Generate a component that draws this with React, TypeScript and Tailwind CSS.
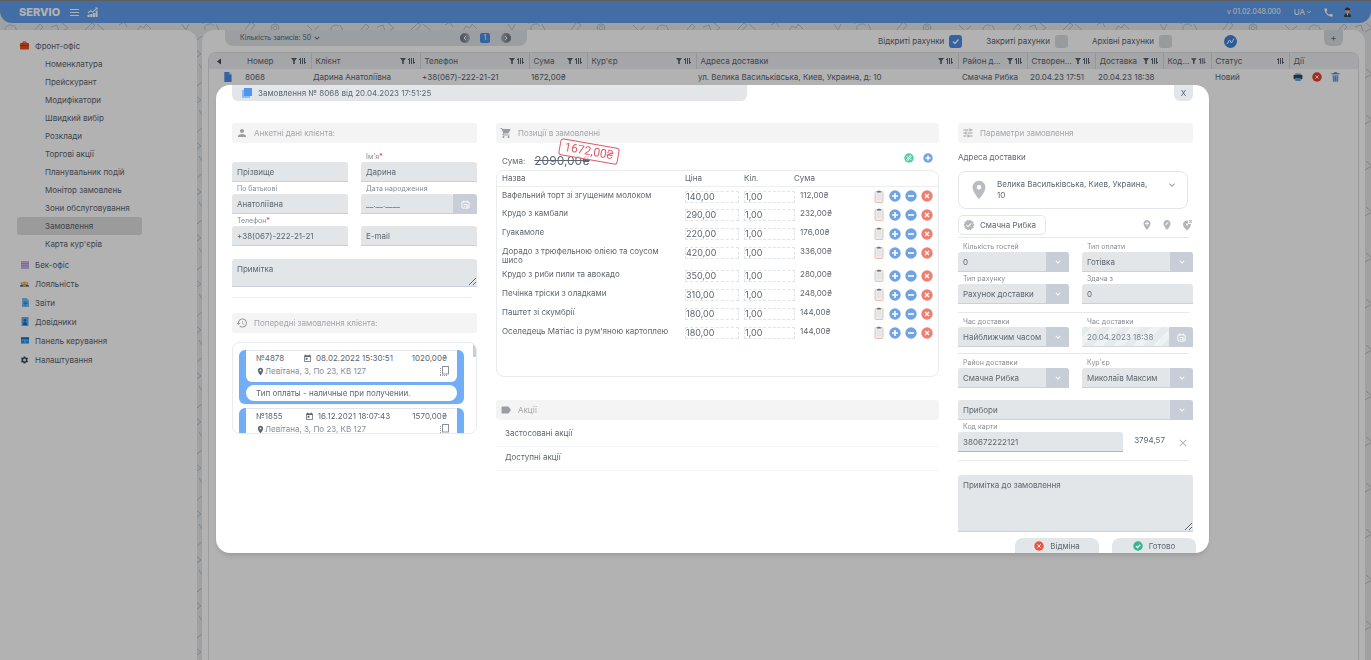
import { useState } from "react";
import type { ReactNode } from "react";
import {
  MdAddLocation,
  MdCall,
  MdClose,
  MdEditLocation,
  MdHistory,
  MdKeyboardArrowDown,
  MdLabel,
  MdLocationOn,
  MdPerson,
  MdSettings,
  MdShoppingCart,
  MdToday,
  MdTune,
  MdVerified,
  MdWrongLocation,
} from "react-icons/md";

const FRONT_OFFICE = [
  "Номенклатура",
  "Прейскурант",
  "Модифікатори",
  "Швидкий вибір",
  "Розклади",
  "Торгові акції",
  "Планувальник подій",
  "Монітор замовлень",
  "Зони обслуговування",
  "Замовлення",
  "Карта кур'єрів",
];

const POSITIONS = [
  { name: "Вафельний торт зі згущеним молоком", price: "140,00", sum: "112,00₴" },
  { name: "Крудо з камбали", price: "290,00", sum: "232,00₴" },
  { name: "Гуакамоле", price: "220,00", sum: "176,00₴" },
  { name: "Дорадо з трюфельною олією та соусом шисо", price: "420,00", sum: "336,00₴" },
  { name: "Крудо з риби пили та авокадо", price: "350,00", sum: "280,00₴" },
  { name: "Печінка тріски з оладками", price: "310,00", sum: "248,00₴" },
  { name: "Паштет зі скумбрії", price: "180,00", sum: "144,00₴" },
  { name: "Оселедець Матіас із рум'яною картоплею", price: "180,00", sum: "144,00₴" },
];

const HISTORY = [
  { no: "№4878", date: "08.02.2022 15:30:51", sum: "1020,00₴", address: "Левітана, 3, По 23, КВ 127" },
  { no: "№1855", date: "16.12.2021 18:07:43", sum: "1570,00₴", address: "Левітана, 3, По 23, КВ 127" },
];

const COLUMNS = [
  { title: "Номер", width: "w-[76px]", filter: true },
  { title: "Клієнт", width: "w-[109px]", filter: true },
  { title: "Телефон", width: "w-[109px]", filter: true },
  { title: "Сума", width: "w-[58px]", filter: true },
  { title: "Кур'єр", width: "w-[109px]", filter: true },
  { title: "Адреса доставки", width: "", filter: true },
  { title: "Район д...", width: "w-[69px]", filter: true },
  { title: "Створен...", width: "w-[68px]", filter: true },
  { title: "Доставка", width: "w-[68px]", filter: true },
  { title: "Код...", width: "w-[48px]", filter: true },
  { title: "Статус", width: "w-[78px]", filter: false },
];

// Faint line drawings behind the panels
function Doodles() {
  return (
    <svg className="absolute inset-0 h-full w-full" aria-hidden="true">
      <defs>
        <pattern id="doodles" width="326" height="46" patternUnits="userSpaceOnUse">
          <g fill="none" stroke="#b9bec3" strokeWidth="1">
            <path d="M5 31a5 5 0 0 1 8-5M14 25l3 6M34 31l6-7 3 3-5 5M51 27l6-2 2 6" />
            <path d="M84 31l8-8 3 2-6 7zM97 24l7 6" />
            <path d="M137 31l3-5 4 2 2-4 5 5M182 24l4 6 3-6" />
            <path d="M205 30a5 5 0 0 1 9-4M216 24l3 6M244 31l7-9 4 3-5 6" />
            <circle cx="275" cy="28" r="4" />
            <circle cx="275" cy="28" r="2" />
            <path d="M307 25l6 6 6-5M196 4l5 4-4 3zM197 40l5-4M199 18l4 6" />
            <path d="M62 23l6 5-7 4M119 25l5-3 3 5" />
          </g>
        </pattern>
      </defs>
      <rect width="100%" height="100%" fill="url(#doodles)" />
    </svg>
  );
}

function ChartIcon() {
  return (
    <svg viewBox="0 0 12 12" className="size-[11px]" fill="#fff" aria-hidden="true">
      <path d="M.5 8.500H3V11H.5zM3.500 7.500H6V11H3.500zM6.500 6.500H9V11H6.500zM9.500 4h2v7h-2z" />
      <path d="M1 6.500l3-2.500 2 1.500 4-3.500" fill="none" stroke="#fff" strokeWidth="1.200" />
      <path d="M8.500.5h3v3z" />
    </svg>
  );
}

function PlusCircle({ className = "size-3" }: { className?: string }) {
  return (
    <svg viewBox="0 0 12 12" className={className} aria-hidden="true">
      <circle cx="6" cy="6" r="5.700" fill="#72a2e6" />
      <path d="M6 3v6M3 6h6" stroke="#fff" strokeWidth="1.600" />
    </svg>
  );
}

function MinusCircle() {
  return (
    <svg viewBox="0 0 12 12" className="size-3" aria-hidden="true">
      <circle cx="6" cy="6" r="5.700" fill="#72a2e6" />
      <path d="M3 6h6" stroke="#fff" strokeWidth="1.600" />
    </svg>
  );
}

function CrossCircle({ className = "size-3", fill = "#f07f72" }: { className?: string; fill?: string }) {
  return (
    <svg viewBox="0 0 12 12" className={className} aria-hidden="true">
      <circle cx="6" cy="6" r="5.700" fill={fill} />
      <path d="M4 4l4 4M8 4l-4 4" stroke="#fff" strokeWidth="1.200" />
    </svg>
  );
}

function CheckCircle() {
  return (
    <svg viewBox="0 0 12 12" className="size-[10px]" aria-hidden="true">
      <circle cx="6" cy="6" r="5.700" fill="#32b893" />
      <path d="M3.500 6l2 2 3.200-3.500" fill="none" stroke="#fff" strokeWidth="1.400" />
    </svg>
  );
}

function PercentCircle() {
  return (
    <svg viewBox="0 0 12 12" className="size-[10px]" aria-hidden="true">
      <circle cx="6" cy="6" r="5.700" fill="#5ccaa5" />
      <path d="M3 4l6 4" stroke="#fff" strokeWidth="1" />
      <circle cx="7.500" cy="4.200" r="1.100" fill="none" stroke="#fff" />
      <circle cx="4.500" cy="7.800" r="1.100" fill="none" stroke="#fff" />
    </svg>
  );
}

function Clipboard() {
  return (
    <svg viewBox="0 0 10 13" className="h-[13px] w-[10px]" aria-hidden="true">
      <rect x="1" y="1.500" width="8" height="11" rx="1" fill="#e9edf2" stroke="#ecc3a6" strokeWidth="1" />
      <path d="M3 2.500V1.300h1.200a.8.8 0 0 1 1.600 0H7v1.200z" fill="#5b6f7c" />
      <path d="M2.500 5h5M2.500 7h5M2.500 9h5" stroke="#d3d9df" strokeWidth=".6" />
    </svg>
  );
}

function CopyIcon() {
  return (
    <svg viewBox="0 0 11 12" className="h-3 w-[11px]" fill="none" stroke="#8a9098" aria-hidden="true">
      <rect x="3.500" y="1.500" width="6" height="7.500" />
      <path d="M1.500 3v8M1 10.500h7" strokeDasharray="1 1" />
    </svg>
  );
}

function CalendarIcon() {
  return (
    <svg viewBox="0 0 10 10" className="size-[9px]" fill="none" stroke="#fff" aria-hidden="true">
      <rect x="1" y="2" width="8" height="7" rx="1" />
      <path d="M3 .5V3M7 .5V3M3 5h4M3 7h1.500" />
      <circle cx="7" cy="7" r="1" />
    </svg>
  );
}

function FilterIcon() {
  return (
    <svg viewBox="0 0 6 6" className="size-[6px]" aria-hidden="true">
      <path d="M0 0h6L3.800 2.800V6H2.200V2.800z" fill="#55606c" />
    </svg>
  );
}

function SortIcon() {
  return (
    <svg viewBox="0 0 7 6" className="h-[6px] w-[7px]" fill="none" stroke="#55606c" aria-hidden="true">
      <path d="M1.500 6V.5M0 2l1.500-1.700M3.500 0v6M5.500 0v5.500M7 4L5.500 5.700" />
    </svg>
  );
}

function SectionTitle({ icon, children }: { icon: ReactNode; children: ReactNode }) {
  return (
    <h3 className="flex h-5 items-center gap-[6px] rounded-[3px] bg-[#f4f4f4] px-1 text-[8px] text-[#a0a5aa]">
      <span className="flex w-3 justify-center text-[12px] text-[#9a9da1]">{icon}</span>
      {children}
    </h3>
  );
}

const FIELD =
  "block h-5 w-full rounded-t-[3px] border-b border-[#c9d0d8] bg-[#e2e6e9] px-[5px] text-[8px] text-[#5d6670] outline-none placeholder:text-[#5d6670]";

function Label({ htmlFor, children, required }: { htmlFor: string; children?: ReactNode; required?: boolean }) {
  return (
    <label htmlFor={htmlFor} className="block h-3 px-[5px] pt-[3px] text-[7px] leading-[8px] text-[#858c94]">
      {children}
      {required && <span className="text-red-500">*</span>}
    </label>
  );
}

type FieldProps = { id: string; label?: string; required?: boolean; value?: string; placeholder?: string };

function TextField({ id, label, required, value, placeholder }: FieldProps) {
  return (
    <div>
      <Label htmlFor={id} required={required}>{label}</Label>
      <input id={id} className={FIELD} defaultValue={value} placeholder={placeholder} aria-label={label ?? placeholder} />
    </div>
  );
}

function DateField({ id, label, value, disabled }: FieldProps & { disabled?: boolean }) {
  return (
    <div>
      <Label htmlFor={id}>{label}</Label>
      <div className="flex">
        <input
          id={id}
          disabled={disabled}
          defaultValue={value}
          className={
            disabled
              ? `${FIELD} min-w-0 flex-1 bg-[repeating-linear-gradient(135deg,#e2e6e9_0px,#e2e6e9_7px,#eceff1_7px,#eceff1_14px)] opacity-80`
              : `${FIELD} min-w-0 flex-1`
          }
        />
        <button aria-label="Календар" className="flex h-5 w-6 items-center justify-center rounded-tr-[3px] bg-[#c7ced8]">
          <CalendarIcon />
        </button>
      </div>
    </div>
  );
}

function SelectField({ id, label, value }: FieldProps) {
  return (
    <div>
      {label && <Label htmlFor={id}>{label}</Label>}
      <div className="relative">
        <select id={id} aria-label={label ?? value} className={`${FIELD} appearance-none`}>
          <option>{value}</option>
        </select>
        <span className="pointer-events-none absolute inset-y-0 right-0 flex w-[23px] items-center justify-center rounded-tr-[3px] bg-[#c7ced8] text-[10px] text-white">
          <MdKeyboardArrowDown />
        </span>
      </div>
    </div>
  );
}

function TopBar() {
  return (
    <header className="relative flex h-[23px] flex-none items-center rounded-b-xl border-t border-[#888] bg-[#609dec] px-[19px] text-white">
      <span className="text-[11px] font-extrabold">SERVIO</span>
      <button aria-label="Меню" className="ml-[10px] flex w-[9px] flex-col gap-[2px]">
        <span className="h-px bg-white" />
        <span className="h-px bg-white" />
        <span className="h-px bg-white" />
      </button>
      <button aria-label="Статистика" className="ml-2"><ChartIcon /></button>
      <span className="ml-auto text-[7px]">v 01.02.048.000</span>
      <button className="ml-[13px] flex items-center text-[8px]">
        UA <MdKeyboardArrowDown />
      </button>
      <button aria-label="Дзвінок" className="ml-[10px] text-[11px]"><MdCall /></button>
      <button aria-label="Профіль" className="ml-[9px]">
        <svg viewBox="0 0 10 11" className="h-[10px] w-[9px]" aria-hidden="true">
          <path d="M1 11c0-3 2-4 4-4s4 1 4 4z" fill="#2c4a58" />
          <path d="M4 7h2l-1 3z" fill="#fff" />
          <circle cx="5" cy="4.500" r="2.500" fill="#f0b07c" />
          <path d="M2 3.500Q2 .5 5 .5t3 3z" fill="#4b3a35" />
        </svg>
      </button>
    </header>
  );
}

function MenuItem({ icon, children }: { icon: ReactNode; children: ReactNode }) {
  return (
    <a href="#" className="flex h-[19px] items-center gap-[6px] pl-5">
      <span className="flex w-[9px] justify-center text-[10px]">{icon}</span>
      {children}
    </a>
  );
}

function Sidebar() {
  return (
    <nav className="w-[197px] flex-none rounded-tr-xl bg-white pt-[6px] text-[8px] text-[#59636f]">
      <MenuItem
        icon={
          <svg viewBox="0 0 9 9" className="size-[9px]">
            <path d="M3 2V1h3v1" fill="none" stroke="#c33b12" />
            <rect y="2" width="9" height="6.500" rx="1" fill="#e4511c" />
            <path d="M0 4.500h9" stroke="#c33b12" />
          </svg>
        }
      >
        Фронт-офіс
      </MenuItem>
      <ul className="pb-[2px] pl-[17px]">
        {FRONT_OFFICE.map((item) => (
          <li key={item}>
            <a
              href="#"
              className={`flex h-[18px] w-[125px] items-center rounded-[3px] pl-7 whitespace-nowrap ${
                item === "Замовлення" ? "bg-[#dedede]" : ""
              }`}
            >
              {item}
            </a>
          </li>
        ))}
      </ul>
      <MenuItem
        icon={
          <svg viewBox="0 0 8 8" className="size-2">
            <rect width="8" height="8" fill="#c9b6e4" />
            <path d="M0 2.500h8M0 5h8" stroke="#a892cf" strokeWidth=".7" />
          </svg>
        }
      >
        Бек-офіс
      </MenuItem>
      <MenuItem
        icon={
          <svg viewBox="0 0 10 8" className="h-2 w-[10px]">
            <g fill="#f5a623">
              <circle cx="2" cy="3" r="1.200" />
              <circle cx="5" cy="2.600" r="1.500" />
              <circle cx="8" cy="3" r="1.200" />
            </g>
            <path d="M0 7q0-2.500 2-2.500h6q2 0 2 2.500z" fill="#4d6470" />
            <path d="M3 7q0-2.500 2-2.500T7 7z" fill="#f5a623" />
          </svg>
        }
      >
        Лояльність
      </MenuItem>
      <MenuItem
        icon={
          <svg viewBox="0 0 8 9" className="h-[9px] w-2">
            <path d="M1 0h4.500L8 2.500V9H1z" fill="#7cc0f5" />
            <path d="M2.500 4h4M2.500 5.500h4M2.500 7h3" stroke="#1c78cf" strokeWidth=".8" />
          </svg>
        }
      >
        Звіти
      </MenuItem>
      <MenuItem
        icon={
          <svg viewBox="0 0 8 9" className="h-[9px] w-2">
            <rect x=".5" width="7" height="9" fill="#5db0f3" />
            <path d="M2 6q2-2 4 0v2H2z" fill="#1c6fc0" />
            <circle cx="4" cy="3.200" r="1.300" fill="#1c6fc0" />
          </svg>
        }
      >
        Довідники
      </MenuItem>
      <MenuItem
        icon={
          <svg viewBox="0 0 9 8" className="h-[7px] w-2">
            <rect y=".5" width="9" height="7" fill="#2196f3" />
            <rect y=".5" width="9" height="2" fill="#0d6fc9" />
            <path d="M1 3.500h3M5 3.500h3M4.500 3v4" stroke="#cfe7fb" strokeWidth=".7" />
          </svg>
        }
      >
        Панель керування
      </MenuItem>
      <MenuItem icon={<MdSettings className="text-[#37505c]" />}>Налаштування</MenuItem>
    </nav>
  );
}

function StatusCheck({ label, checked }: { label: string; checked?: boolean }) {
  return (
    <label className="flex items-center gap-[5px] whitespace-nowrap">
      {label}
      <span className="relative flex size-[13px]">
        <input
          type="checkbox"
          defaultChecked={checked}
          className="peer size-[13px] appearance-none rounded-[3px] bg-[#d9dfe3] checked:bg-[#4a8fe8]"
        />
        <svg viewBox="0 0 13 13" className="pointer-events-none absolute inset-0 hidden peer-checked:block" fill="none" stroke="#fff" strokeWidth="1.300">
          <path d="M4 6.500l2 2 3.500-4" />
        </svg>
      </span>
    </label>
  );
}

function OrdersPage() {
  return (
    <main className="mr-[6px] flex min-w-0 flex-1 flex-col rounded-t-xl bg-white px-[6px] text-[8px] text-[#59636f]">
      <div className="flex h-[22px] flex-none items-start pl-[17px]">
        <div className="flex h-4 w-[302px] items-center rounded-b-lg bg-[#dfe4e8] pr-4 pl-[15px] text-[7px]">
          <span>Кількість записів: 50</span>
          <MdKeyboardArrowDown className="ml-px text-[10px]" />
          <button aria-label="Назад" className="mr-[10px] ml-auto flex size-[10px] items-center justify-center rounded-full bg-[linear-gradient(90deg,#6a737e,#aab2ba)]">
            <svg viewBox="0 0 10 10" className="size-[10px]" fill="none" stroke="#fff"><path d="M6 3L4 5l2 2" /></svg>
          </button>
          <button className="mr-[11px] size-[10px] rounded-xs bg-[#4a8fe8] text-[7px] leading-[10px] text-white">1</button>
          <button aria-label="Вперед" className="flex size-[10px] items-center justify-center rounded-full bg-[linear-gradient(90deg,#aab2ba,#6a737e)]">
            <svg viewBox="0 0 10 10" className="size-[10px]" fill="none" stroke="#fff"><path d="M4 3l2 2-2 2" /></svg>
          </button>
        </div>
        <div className="ml-auto flex h-[22px] items-center gap-6">
          <StatusCheck label="Відкриті рахунки" checked />
          <StatusCheck label="Закриті рахунки" />
          <StatusCheck label="Архівні рахунки" />
        </div>
        <button aria-label="Аналітика" className="mt-[5px] ml-[52px]">
          <svg viewBox="0 0 13 13" className="size-[13px]" aria-hidden="true">
            <circle cx="6.500" cy="6.500" r="6.500" fill="#3f83e0" />
            <path d="M3 9l2.500-4 2 3L10 3.500" fill="none" stroke="#fff" />
          </svg>
        </button>
        <button className="mr-4 ml-[87px] h-4 w-[19px] rounded-b-md bg-[#d9dfe3] text-[9px]">+</button>
      </div>
      <div className="flex-1 overflow-hidden rounded-t-lg border-x border-t border-[#dde0e3]">
        <table className="w-full table-fixed text-left">
          <thead className="bg-[#eceeef]">
            <tr className="h-4">
              <th className="w-[26px] pl-2">
                <svg viewBox="0 0 4 6" className="h-[7px] w-1"><path d="M4 0v6L0 3z" fill="#3f4955" /></svg>
              </th>
              {COLUMNS.map((column, i) => (
                <th key={column.title} className={`${column.width} border-r border-[#d5d9dd] font-normal`}>
                  <div className={`flex items-center gap-[2px] pr-[5px] leading-3 whitespace-nowrap ${i === 0 ? "pl-3" : "pl-1"}`}>
                    <span className="mr-auto">{column.title}</span>
                    {column.filter && <FilterIcon />}
                    <SortIcon />
                  </div>
                </th>
              ))}
              <th className="w-[69px] pl-1 leading-3 font-normal">Дії</th>
            </tr>
          </thead>
          <tbody>
            <tr className="h-4 leading-3 whitespace-nowrap">
              <td className="pl-[14px]">
                <svg viewBox="0 0 9 11" className="h-[10px] w-[9px]"><path d="M1 0h5l3 3v8H1z" fill="#4a8fe8" /><path d="M6 0v3h3z" fill="#9cc3f5" /></svg>
              </td>
              <td className="pl-[10px]">8068</td>
              <td className="pl-[2px]">Дарина Анатоліївна</td>
              <td className="pl-[2px]">+38(067)-222-21-21</td>
              <td className="pl-[2px]">1672,00₴</td>
              <td />
              <td className="pl-[2px]">ул. Велика Васильківська, Киев, Украина, д: 10</td>
              <td className="pl-1">Смачна Рибка</td>
              <td className="pl-[3px]">20.04.23 17:51</td>
              <td className="pl-[3px]">20.04.23 18:38</td>
              <td />
              <td className="pl-1">Новий</td>
              <td>
                <div className="flex items-center gap-[9px] pl-1">
                  <button aria-label="Друк">
                    <svg viewBox="0 0 10 9" className="h-2 w-[10px]">
                      <rect x="2" width="6" height="3" fill="#8fc7f5" />
                      <rect y="2" width="10" height="5" rx="1" fill="#37474f" />
                      <rect x="2" y="5.500" width="6" height="3.500" fill="#5aa7e8" />
                    </svg>
                  </button>
                  <button aria-label="Скасувати"><CrossCircle className="size-[10px]" fill="#e8402f" /></button>
                  <button aria-label="Видалити">
                    <svg viewBox="0 0 9 11" className="h-[10px] w-[9px]">
                      <path d="M1 3h7l-.5 8h-6z" fill="#a9c8f2" />
                      <path d="M0 2h9M3 .8h3" stroke="#3c7fdc" strokeWidth="1.200" />
                      <path d="M2.500 4.500V10M4.500 4.500V10M6.500 4.500V10" stroke="#3c7fdc" strokeWidth=".8" />
                    </svg>
                  </button>
                </div>
              </td>
            </tr>
          </tbody>
        </table>
      </div>
    </main>
  );
}

function ClientColumn() {
  return (
    <section>
      <SectionTitle icon={<MdPerson />}>Анкетні дані клієнта:</SectionTitle>
      <div className="mt-[7px] grid grid-cols-2 gap-x-[13px]">
        <TextField id="surname" placeholder="Прізвище" />
        <TextField id="name" label="Ім'я" required value="Дарина" />
        <TextField id="patronymic" label="По батькові" value="Анатоліївна" />
        <DateField id="birthday" label="Дата народження" value="__.__.____" />
        <TextField id="phone" label="Телефон" required value="+38(067)-222-21-21" />
        <TextField id="email" placeholder="E-mail" />
      </div>
      <textarea
        aria-label="Примітка"
        placeholder="Примітка"
        className="mt-[13px] block h-7 w-full rounded-t-[3px] border-b border-[#c9d0d8] bg-[#e2e6e9] px-[5px] py-1 text-[8px] placeholder:text-[#5d6670]"
      />
      <hr className="mt-[10px] mr-[6px] border-[#eceeef]" />
      <div className="mt-[15px]">
        <SectionTitle icon={<MdHistory />}>Попередні замовлення клієнта:</SectionTitle>
      </div>
      <div className="relative mt-[9px] h-[92px] overflow-hidden rounded-lg border border-[#e9ebed] pt-[7px] pr-3 pl-[6px]">
        {HISTORY.map((order) => (
          <article key={order.no} className="mb-1 rounded-md bg-[#72aef5] px-[7px] pb-[3px] text-[8px] text-[#5d6670] shadow-xs">
            <div className="h-8 rounded-b-md border-t border-[#e3e6e9] bg-white px-[10px] pt-px">
              <div className="flex h-3 items-center">
                <span>{order.no}</span>
                <MdToday className="mr-1 ml-auto text-[9px]" />
                <span>{order.date}</span>
                <span className="ml-auto">{order.sum}</span>
              </div>
              <div className="flex h-[14px] items-center text-[#888f97]">
                <MdLocationOn className="text-[9px] text-[#5d6670]" />
                {order.address}
                <button aria-label="Копіювати" className="-mr-[3px] ml-auto"><CopyIcon /></button>
              </div>
            </div>
            <p className="mt-[3px] h-4 rounded-lg bg-white px-[10px] leading-4">Тип оплаты - наличные при получении.</p>
          </article>
        ))}
        <span className="absolute top-0 right-0 h-[14px] w-[3px] bg-[#c7ced8]" />
      </div>
    </section>
  );
}

function PositionsColumn() {
  return (
    <section>
      <SectionTitle icon={<MdShoppingCart />}>Позиції в замовленні</SectionTitle>
      <div className="relative flex h-[27px] items-center px-[6px] pt-2">
        <span className="text-[8px]">Сума:</span>
        <del className="ml-[9px] text-[12px]">2090,00₴</del>
        <strong className="absolute top-0 left-[63px] rotate-10 rounded-[3px] border border-[#e0596a] bg-white/70 px-1 font-['Roboto',sans-serif] text-[12px] leading-[15px] font-normal text-[#e0596a]">
          1672,00₴
        </strong>
        <button aria-label="Знижка" className="mb-[6px] ml-auto"><PercentCircle /></button>
        <button aria-label="Додати" className="mb-[6px] ml-[9px]"><PlusCircle className="size-[10px]" /></button>
      </div>
      <div className="h-[207px] rounded-lg border border-[#e9ebed]">
        <table className="w-full table-fixed text-left text-[8px]">
          <thead>
            <tr className="h-[15px] border-b border-[#eceeef]">
              <th className="pl-[5px] leading-3 font-normal">Назва</th>
              <th className="w-[59px] leading-3 font-normal">Ціна</th>
              <th className="w-[50px] leading-3 font-normal">Кіл.</th>
              <th className="w-[80px] leading-3 font-normal">Сума</th>
              <th className="w-16" aria-label="Дії" />
            </tr>
          </thead>
          <tbody>
            {POSITIONS.map((item) => (
              <tr key={item.name} className="h-[19px] align-top">
                <td className="pt-1 pr-[11px] pb-px pl-[5px] leading-[9px]">{item.name}</td>
                <td className="pt-1">
                  <input aria-label="Ціна" defaultValue={item.price} className="block h-3 w-[54px] border border-dashed border-[#e1e4e7] text-[9px]" />
                </td>
                <td className="pt-1">
                  <input aria-label="Кількість" defaultValue="1,00" className="block h-3 w-[51px] border border-dashed border-[#e1e4e7] text-[9px]" />
                </td>
                <td className="pt-1 pl-[6px] leading-[9px]">{item.sum}</td>
                <td className="pt-[3px]">
                  <div className="flex h-[13px] items-center gap-1">
                    <button aria-label="Примітка"><Clipboard /></button>
                    <button aria-label="Більше" className="ml-px"><PlusCircle /></button>
                    <button aria-label="Менше"><MinusCircle /></button>
                    <button aria-label="Прибрати"><CrossCircle /></button>
                  </div>
                </td>
              </tr>
            ))}
          </tbody>
        </table>
      </div>
      <div className="mt-[23px]">
        <SectionTitle icon={<MdLabel />}>Акції</SectionTitle>
      </div>
      <button className="block h-[27px] w-full border-b border-[#f4f5f6] px-[9px] text-left text-[8px]">Застосовані акції</button>
      <button className="block h-6 w-full border-b border-[#f4f5f6] px-[9px] pb-[3px] text-left text-[8px]">Доступні акції</button>
    </section>
  );
}

function DeliveryColumn() {
  return (
    <section>
      <SectionTitle icon={<MdTune />}>Параметри замовлення</SectionTitle>
      <h4 className="mt-2 text-[8px] leading-3">Адреса доставки</h4>
      <button className="mt-2 flex h-[38px] w-[calc(100%-5px)] items-start rounded-lg border border-[#e3e6e9] px-[9px] pt-[7px] text-left text-[8px] leading-[11px]">
        <MdLocationOn className="size-[22px] flex-none text-[#b9bcc0]" />
        <span className="ml-[7px] flex-1 pr-3">Велика Васильківська, Киев, Украина, 10</span>
        <MdKeyboardArrowDown className="text-[12px] text-[#9a9da1]" />
      </button>
      <div className="mt-[6px] flex items-center gap-2 text-[12px] text-[#b3b6ba]">
        <button className="mr-auto flex h-5 items-center gap-[5px] rounded-[5px] border border-[#e3e6e9] pr-[9px] pl-1 text-[8px] text-[#5d6670]">
          <MdVerified className="text-[12px] text-[#b3b6ba]" />
          Смачна Рибка
        </button>
        <button aria-label="Додати адресу"><MdAddLocation /></button>
        <button aria-label="Змінити адресу"><MdEditLocation /></button>
        <button aria-label="Видалити адресу"><MdWrongLocation /></button>
      </div>
      <hr className="mt-[2px] mr-1 border-[#e6e8ea]" />
      <div className="mt-[2px] grid grid-cols-2 gap-x-[13px]">
        <SelectField id="guests" label="Кількість гостей" value="0" />
        <SelectField id="payment" label="Тип оплати" value="Готівка" />
        <SelectField id="bill" label="Тип рахунку" value="Рахунок доставки" />
        <TextField id="change" label="Здача з" value="0" />
      </div>
      <hr className="mt-2 mr-1 border-[#e6e8ea]" />
      <div className="mt-[2px] grid grid-cols-2 gap-x-[13px]">
        <SelectField id="time-mode" label="Час доставки" value="Найближчим часом" />
        <DateField id="time" label="Час доставки" value="20.04.2023 18:38" disabled />
      </div>
      <hr className="mt-[6px] mr-1 border-[#e6e8ea]" />
      <div className="mt-[2px] grid grid-cols-2 gap-x-[13px]">
        <SelectField id="district" label="Район доставки" value="Смачна Рибка" />
        <SelectField id="courier" label="Кур'єр" value="Миколаїв Максим" />
      </div>
      <div className="mt-3">
        <SelectField id="cutlery" value="Прибори" />
      </div>
      <div className="flex items-end">
        <div className="w-[70%]">
          <Label htmlFor="card">Код карти</Label>
          <input
            id="card"
            defaultValue="380672222121"
            className="block h-5 w-full rounded-t-[3px] border-b border-[#8fb8ee] bg-[#e2e6e9] px-[5px] text-[8px] text-[#5d6670] outline-none"
          />
        </div>
        <span className="mb-[7px] ml-auto text-[8px] leading-[10px]">3794,57</span>
        <button aria-label="Очистити" className="mr-1 mb-[3px] ml-3 text-[12px] text-[#b3b6ba]"><MdClose /></button>
      </div>
      <hr className="mt-2 mr-1 border-[#e6e8ea]" />
      <textarea
        aria-label="Примітка до замовлення"
        placeholder="Примітка до замовлення"
        className="mt-[14px] block h-[57px] w-full rounded-t-[3px] border-b border-[#c9d0d8] bg-[#e2e6e9] px-[5px] py-1 text-[8px] placeholder:text-[#5d6670]"
      />
    </section>
  );
}

function OrderDialog({ onClose }: { onClose: () => void }) {
  return (
    <div className="fixed inset-0 overflow-hidden bg-black/30 pt-[85px] pr-[162px] pl-[216px]">
      <div role="dialog" aria-labelledby="order-title" className="rounded-[14px] bg-white px-4 text-[#5d6670] shadow-md">
        <div className="flex items-start justify-between">
          <h2 id="order-title" className="flex h-4 w-[515px] items-center gap-[6px] rounded-b-md bg-[#e2e6e9] px-[10px] text-[8px]">
            <svg viewBox="0 0 10 10" className="size-[10px]" aria-hidden="true">
              <rect y="2" width="8" height="8" fill="#8cbcf7" />
              <rect x="2" width="8" height="8" fill="#4f95ef" />
            </svg>
            Замовлення № 8068 від 20.04.2023 17:51:25
          </h2>
          <button onClick={onClose} className="h-4 w-[19px] rounded-b-md bg-[#e2e6e9] text-[8px]">X</button>
        </div>
        <div className="mt-[22px] grid grid-cols-[245fr_443fr_235fr] gap-[19px]">
          <ClientColumn />
          <PositionsColumn />
          <DeliveryColumn />
        </div>
        <div className="mt-[6px] -mr-[3px] flex justify-end gap-[13px] text-[8px]">
          <button className="flex h-[15px] w-[84px] items-center justify-center gap-[6px] rounded-t-lg bg-[#e2e6e9]">
            <CrossCircle className="size-[10px]" fill="#ee5340" />
            Відміна
          </button>
          <button className="flex h-[15px] w-[84px] items-center justify-center gap-[6px] rounded-t-lg bg-[#e2e6e9]">
            <CheckCircle />
            Готово
          </button>
        </div>
      </div>
    </div>
  );
}

export default function App() {
  const [open, setOpen] = useState(true);

  return (
    <div className="relative flex h-screen flex-col overflow-hidden bg-[#e4e7ea] font-['Inter','Noto_Sans',sans-serif]">
      <Doodles />
      <TopBar />
      <div className="relative flex flex-1 gap-[5px] pt-[7px]">
        <Sidebar />
        <OrdersPage />
      </div>
      {open && <OrderDialog onClose={() => setOpen(false)} />}
    </div>
  );
}
